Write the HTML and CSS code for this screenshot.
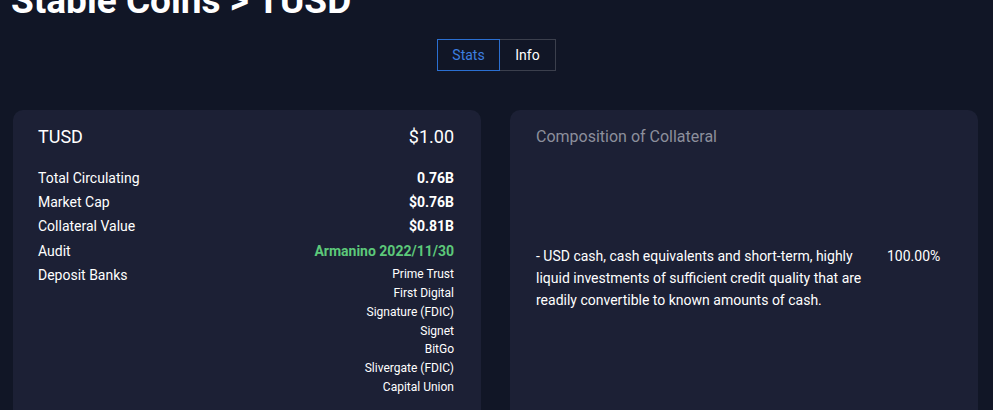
FILE: index.html
```html
<!DOCTYPE html>
<html>
<head>
<meta charset="utf-8">
<link rel="stylesheet" href="styles.css">
</head>
<body>
<div class="page">
  <h1 class="title">Stable Coins &gt; TUSD</h1>
  <div class="tabs">
    <button class="tab active">Stats</button>
    <button class="tab">Info</button>
  </div>
  <div class="cards">
    <section class="card">
      <div class="card-head">
        <span>TUSD</span>
        <span>$1.00</span>
      </div>
      <div class="rows">
        <div class="row"><span>Total Circulating</span><span class="val">0.76B</span></div>
        <div class="row"><span>Market Cap</span><span class="val">$0.76B</span></div>
        <div class="row"><span>Collateral Value</span><span class="val">$0.81B</span></div>
        <div class="row"><span>Audit</span><span class="val green">Armanino 2022/11/30</span></div>
        <div class="row banks-row">
          <span>Deposit Banks</span>
          <ul class="banks">
            <li>Prime Trust</li>
            <li>First Digital</li>
            <li>Signature (FDIC)</li>
            <li>Signet</li>
            <li>BitGo</li>
            <li>Slivergate (FDIC)</li>
            <li>Capital Union</li>
          </ul>
        </div>
      </div>
    </section>
    <section class="card card-right">
      <div class="card-title">Composition of Collateral</div>
      <div class="comp">
        <p class="comp-text">- USD cash, cash equivalents and short-term, highly liquid investments of sufficient credit quality that are readily convertible to known amounts of cash.</p>
        <span class="comp-pct">100.00%</span>
      </div>
    </section>
  </div>
</div>
</body>
</html>
```
FILE: styles.css
```css
* { box-sizing: border-box; }
html, body { margin: 0; padding: 0; }
body {
  background: #111626;
  color: #ffffff;
  font-family: Roboto, "Noto Sans", sans-serif;
  height: 410px;
  overflow: hidden;
}
.page {
  padding: 0 15px 0 13px;
}
.title {
  margin: -20px 0 0 -2px;
  font-size: 37px;
  font-weight: 700;
  line-height: 42px;
  color: #ffffff;
}
.tabs {
  display: flex;
  justify-content: center;
  margin-top: 17px;
  padding-left: 2px;
}
.tab {
  font-family: Roboto, sans-serif;
  font-size: 14px;
  background: transparent;
  color: #ffffff;
  border: 1px solid #3b3f4c;
  height: 32px;
  padding: 0 14px;
  margin: 0;
  cursor: pointer;
}
.tab.active {
  color: #3d7fe0;
  border-color: #2b6fd1;
  width: 63px;
}
.tab + .tab { border-left: none; width: 56px; }
.cards {
  display: grid;
  grid-template-columns: 468px 468px;
  gap: 29px;
  margin-top: 39px;
}
.card {
  background: #1c2035;
  border-radius: 10px;
  height: 330px;
  padding: 16px 27px 0 25px;
}
.card-right {
  padding-left: 26px;
}
.card-head {
  display: flex;
  justify-content: space-between;
  font-size: 18px;
  line-height: 22px;
}
.rows {
  margin-top: 18px;
  font-size: 14px;
}
.row {
  display: flex;
  justify-content: space-between;
  line-height: 24.2px;
}
.val { font-weight: 700; }
.green { color: #5cc97a; }
.banks-row { align-items: flex-start; }
.banks {
  list-style: none;
  margin: 0;
  padding: 0;
  font-size: 12px;
  line-height: 18.9px;
  text-align: right;
  margin-top: 2px;
}
.card-title {
  color: #8c8f9c;
  font-size: 16px;
  line-height: 22px;
}
.comp {
  display: flex;
  align-items: flex-start;
  margin-top: 97px;
  font-size: 14px;
  line-height: 22px;
}
.comp-text {
  margin: 0;
  width: 330px;
}
.comp-pct {
  margin-left: 21px;
}
```
